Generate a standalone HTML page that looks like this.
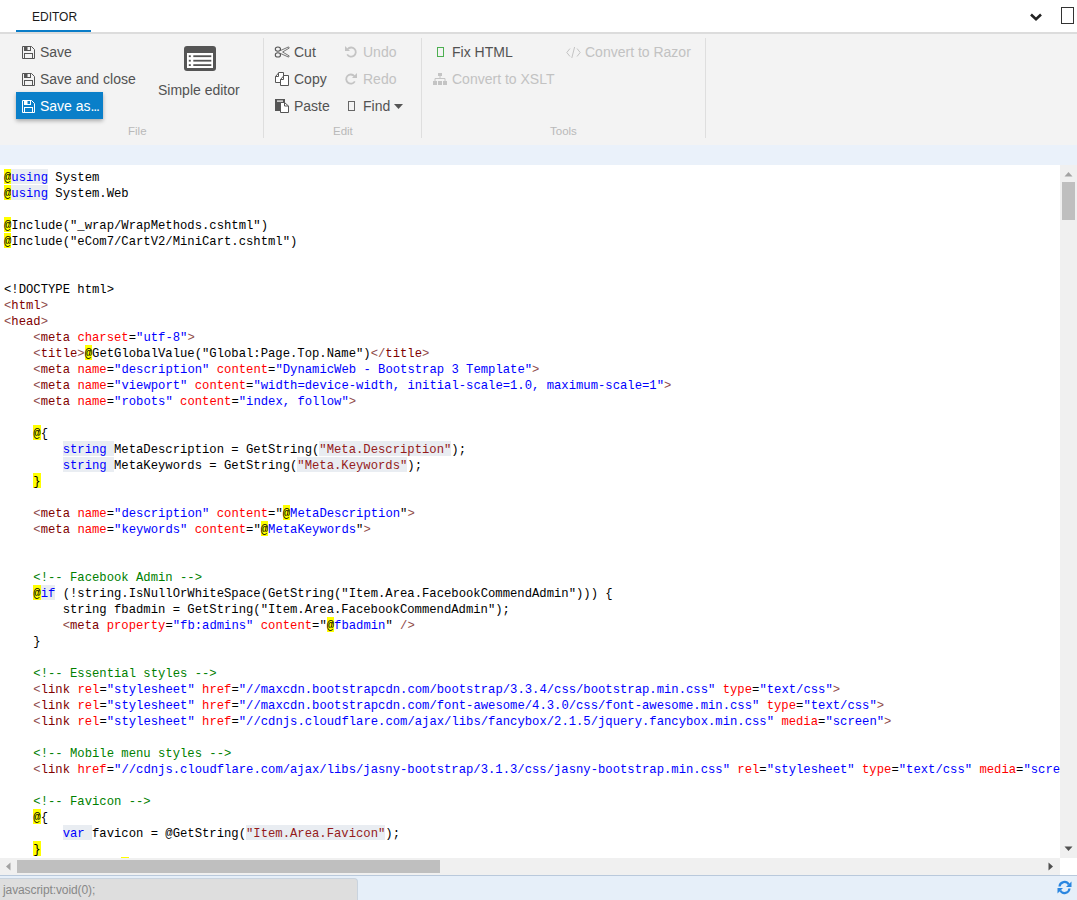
<!DOCTYPE html>
<html><head><meta charset="utf-8">
<style>
*{margin:0;padding:0;box-sizing:border-box}
html,body{width:1077px;height:900px;overflow:hidden;background:#fff}
body{position:relative;font-family:"Liberation Sans",sans-serif;color:#4a4a4a}
.abs{position:absolute}
#topbar{left:0;top:0;width:1077px;height:32px;background:#fff}
#tab{left:32px;top:10px;font-size:12px;line-height:14px;color:#1a1a1a;letter-spacing:0}
#tabline{left:16px;top:30px;width:75px;height:2px;background:#0a7dc8}
#topsep{left:0;top:32px;width:1077px;height:2px;background:#dcdcdc}
#ribbon{left:0;top:34px;width:1077px;height:111px;background:#f3f3f3}
#band{left:0;top:145px;width:1077px;height:20px;background:#eaf1fa}
.t{position:absolute;font-size:14px;line-height:16px;white-space:nowrap;color:#525252}
.dis{color:#c2c2c2}
.lbl{position:absolute;font-size:11.5px;line-height:13px;color:#b9b9b9;white-space:nowrap}
.vsep{position:absolute;top:38px;width:1px;height:100px;background:#dedede}
#saveas{left:16px;top:92px;width:87px;height:27px;background:#0a7fc9;box-shadow:0 2px 4px rgba(0,0,0,.3)}
#code{left:0;top:165px;width:1060px;height:693px;overflow:hidden;background:#fff}
#codein{position:absolute;left:4px;top:4px;font-family:"Liberation Mono",monospace;font-size:12.22px;line-height:16px;white-space:pre;color:#000}
.ln{height:16px;line-height:18px}
.y,.kw,.str{display:inline-block;vertical-align:top;height:15px}
.y{background:#ffff00}
.kw{color:#0000ff;background:#e9edf2}
.str{color:#951b1b;background:#e9edf2}
.tb{color:#8f4a4a}
.tn{color:#800000}
.an{color:#ff0000}
.av{color:#0000ff}
.cm{color:#008000}
#vscroll{left:1060px;top:165px;width:17px;height:693px;background:#f0f0f0}
#vthumb{left:1062px;top:182px;width:13px;height:38px;background:#bfbfbf}
#hscroll{left:0;top:858px;width:1060px;height:17px;background:#f0f0f0}
#hthumb{left:17px;top:860px;width:423px;height:13px;background:#bfbfbf}
#corner{left:1060px;top:858px;width:17px;height:17px;background:#fff}
#status{left:0;top:875px;width:1077px;height:25px;background:#e6eff9;border-top:1px solid #b9c9dc}
#stbox{left:0;top:878px;width:358px;height:22px;background:#dedede;border:1px solid #c9d3de;border-left:none;border-bottom:none;border-top-right-radius:4px}
#sttext{left:3px;top:883px;font-size:12px;line-height:14px;color:#888;white-space:nowrap;letter-spacing:-0.1px}
</style></head><body>
<div id="topbar" class="abs"></div>
<div id="tab" class="abs">EDITOR</div>
<div id="tabline" class="abs"></div>
<div id="topsep" class="abs"></div>
<svg class="abs" style="left:1029px;top:12px" width="14" height="10" viewBox="0 0 14 10"><path d="M2 2.5 L7 7.2 L12 2.5" fill="none" stroke="#222" stroke-width="2.6"/></svg>
<div class="abs" style="left:1061px;top:7px;width:13px;height:17px;border:1px solid #333"></div>

<div id="ribbon" class="abs"></div>
<!-- File group -->
<svg class="abs" style="left:22px;top:46px" width="13" height="13" viewBox="0 0 13 13"><path d="M0.5 0.5H9.5L12.5 3.5V12.5H0.5Z" fill="none" stroke="#555" stroke-width="1"/><rect x="2.5" y="0.5" width="6" height="4" fill="none" stroke="#555"/><rect x="3" y="1" width="2.5" height="3" fill="#555"/><rect x="2.5" y="7.5" width="8" height="5" fill="none" stroke="#555"/></svg>
<div class="t" style="left:40px;top:44px">Save</div>
<svg class="abs" style="left:22px;top:73px" width="13" height="13" viewBox="0 0 13 13"><path d="M0.5 0.5H9.5L12.5 3.5V12.5H0.5Z" fill="none" stroke="#555" stroke-width="1"/><rect x="2.5" y="0.5" width="6" height="4" fill="none" stroke="#555"/><rect x="3" y="1" width="2.5" height="3" fill="#555"/><rect x="2.5" y="7.5" width="8" height="5" fill="none" stroke="#555"/></svg>
<div class="t" style="left:40px;top:71px">Save and close</div>
<div id="saveas" class="abs"></div>
<svg class="abs" style="left:22px;top:100px" width="13" height="13" viewBox="0 0 13 13"><path d="M0.5 0.5H9.5L12.5 3.5V12.5H0.5Z" fill="none" stroke="#fff" stroke-width="1"/><rect x="2.5" y="0.5" width="6" height="4" fill="none" stroke="#fff"/><rect x="3" y="1" width="2.5" height="3" fill="#fff"/><rect x="2.5" y="7.5" width="8" height="5" fill="none" stroke="#fff"/></svg>
<div class="t" style="left:40px;top:98px;color:#fff">Save as<span style="letter-spacing:-1.2px">...</span></div>
<svg class="abs" style="left:184px;top:46px" width="32" height="25" viewBox="0 0 32 25"><rect x="0" y="0" width="32" height="25" rx="3" fill="#555"/><rect x="3" y="7" width="26" height="15" fill="#fff"/><rect x="4.8" y="9.3" width="2" height="1.8" fill="#555"/><rect x="4.8" y="13.8" width="2" height="1.8" fill="#555"/><rect x="4.8" y="18.2" width="2" height="1.8" fill="#555"/><rect x="9.3" y="9.3" width="18" height="1.8" fill="#555"/><rect x="9.3" y="13.8" width="18" height="1.8" fill="#555"/><rect x="9.3" y="18.2" width="18" height="1.8" fill="#555"/></svg>
<div class="t" style="left:158px;top:82px">Simple editor</div>
<div class="lbl" style="left:128px;top:125px">File</div>
<div class="vsep" style="left:263px"></div>
<!-- Edit group -->
<svg class="abs" style="left:274px;top:46px" width="16" height="12" viewBox="0 0 16 12"><ellipse cx="3.9" cy="3.1" rx="2.6" ry="2.1" fill="none" stroke="#555" stroke-width="1.1"/><ellipse cx="3.9" cy="8.9" rx="2.6" ry="2.1" fill="none" stroke="#555" stroke-width="1.1"/><path d="M6.3 4.6 L14.6 0.9 L15.2 2.1 L8.6 6 L15.2 9.9 L14.6 11.1 L6.3 7.4" fill="none" stroke="#555" stroke-width="0.8" stroke-linejoin="round"/></svg>
<div class="t" style="left:294px;top:44px">Cut</div>
<svg class="abs" style="left:275px;top:72px" width="15" height="14" viewBox="0 0 15 14"><path d="M0.5 4.5L4 0.5H8.5V10.5H0.5Z" fill="#fff" stroke="#555"/><path d="M0.5 4.5H3.5V0.5" fill="none" stroke="#555"/><path d="M5.5 7.5L9 3.5H13.5V13.5H5.5Z" fill="#fff" stroke="#555"/><path d="M5.5 7.5H8.5V3.5" fill="none" stroke="#555"/></svg>
<div class="t" style="left:294px;top:71px">Copy</div>
<svg class="abs" style="left:275px;top:99px" width="15" height="14" viewBox="0 0 15 14"><rect x="0.5" y="0.5" width="9" height="11" fill="#555" stroke="#555"/><rect x="2" y="1.5" width="6" height="1.2" fill="#fff"/><path d="M5.5 3.5H9.5L13.5 7V13.5H5.5Z" fill="#fff" stroke="#555"/><path d="M9.5 3.5V7H13.5" fill="none" stroke="#555"/></svg>
<div class="t" style="left:294px;top:98px">Paste</div>
<svg class="abs" style="left:345px;top:46px" width="12" height="12" viewBox="0 0 12 12"><path d="M2.6 3.2 A4.6 4.6 0 1 1 2.2 8.4" fill="none" stroke="#c4c4c4" stroke-width="1.8"/><path d="M0 0 L0 5 L5 5 Z" fill="#c4c4c4"/></svg>
<div class="t dis" style="left:363px;top:44px">Undo</div>
<svg class="abs" style="left:345px;top:73px" width="12" height="12" viewBox="0 0 12 12"><path d="M9.4 3.2 A4.6 4.6 0 1 0 9.8 8.4" fill="none" stroke="#c4c4c4" stroke-width="1.8"/><path d="M12 0 L12 5 L7 5 Z" fill="#c4c4c4"/></svg>
<div class="t dis" style="left:363px;top:71px">Redo</div>
<div class="abs" style="left:348px;top:101px;width:7px;height:10px;border:1px solid #666"></div>
<div class="t" style="left:363px;top:98px">Find</div>
<svg class="abs" style="left:394px;top:104px" width="9" height="5" viewBox="0 0 9 5"><path d="M0 0H9L4.5 5Z" fill="#555"/></svg>
<div class="lbl" style="left:333px;top:125px">Edit</div>
<div class="vsep" style="left:421px"></div>
<!-- Tools group -->
<div class="abs" style="left:437px;top:47px;width:7px;height:10px;border:1px solid #4caf50"></div>
<div class="t" style="left:452px;top:44px">Fix HTML</div>
<svg class="abs" style="left:566px;top:47px" width="15" height="11" viewBox="0 0 15 11"><path d="M4 1.5 L0.8 5.5 L4 9.5 M11 1.5 L14.2 5.5 L11 9.5 M8.6 0 L5.8 11" fill="none" stroke="#c4c4c4" stroke-width="1"/></svg>
<div class="t dis" style="left:585px;top:44px">Convert to Razor</div>
<svg class="abs" style="left:433px;top:73px" width="14" height="12" viewBox="0 0 14 12"><rect x="5" y="0" width="4" height="3" fill="#c4c4c4"/><path d="M7 3V5.5M2 8V5.5H12V8" fill="none" stroke="#c4c4c4" stroke-width="1"/><rect x="0" y="8" width="4" height="4" fill="#c4c4c4"/><rect x="5" y="8" width="4" height="4" fill="#c4c4c4"/><rect x="10" y="8" width="4" height="4" fill="#c4c4c4"/></svg>
<div class="t dis" style="left:452px;top:71px">Convert to XSLT</div>
<div class="lbl" style="left:550px;top:125px">Tools</div>
<div class="vsep" style="left:705px"></div>

<div id="band" class="abs"></div>
<div id="code" class="abs"><div id="codein"><div class="ln"><span class="y">@</span><span class="kw">using</span> System</div><div class="ln"><span class="y">@</span><span class="kw">using</span> System.Web</div><div class="ln">&#8203;</div><div class="ln"><span class="y">@</span>Include("_wrap/WrapMethods.cshtml")</div><div class="ln"><span class="y">@</span>Include("eCom7/CartV2/MiniCart.cshtml")</div><div class="ln">&#8203;</div><div class="ln">&#8203;</div><div class="ln">&lt;!DOCTYPE html&gt;</div><div class="ln"><span class="tb">&lt;</span><span class="tn">html</span><span class="tb">&gt;</span></div><div class="ln"><span class="tb">&lt;</span><span class="tn">head</span><span class="tb">&gt;</span></div><div class="ln">    <span class="tb">&lt;</span><span class="tn">meta</span> <span class="an">charset</span>=<span class="av">"utf-8"</span><span class="tb">&gt;</span></div><div class="ln">    <span class="tb">&lt;</span><span class="tn">title</span><span class="tb">&gt;</span><span class="y">@</span>GetGlobalValue("Global:Page.Top.Name")<span class="tb">&lt;/</span><span class="tn">title</span><span class="tb">&gt;</span></div><div class="ln">    <span class="tb">&lt;</span><span class="tn">meta</span> <span class="an">name</span>=<span class="av">"description"</span> <span class="an">content</span>=<span class="av">"DynamicWeb - Bootstrap 3 Template"</span><span class="tb">&gt;</span></div><div class="ln">    <span class="tb">&lt;</span><span class="tn">meta</span> <span class="an">name</span>=<span class="av">"viewport"</span> <span class="an">content</span>=<span class="av">"width=device-width, initial-scale=1.0, maximum-scale=1"</span><span class="tb">&gt;</span></div><div class="ln">    <span class="tb">&lt;</span><span class="tn">meta</span> <span class="an">name</span>=<span class="av">"robots"</span> <span class="an">content</span>=<span class="av">"index, follow"</span><span class="tb">&gt;</span></div><div class="ln">&#8203;</div><div class="ln">    <span class="y">@</span>{</div><div class="ln">        <span class="kw">string </span>MetaDescription = GetString(<span class="str">"Meta.Description"</span>);</div><div class="ln">        <span class="kw">string </span>MetaKeywords = GetString(<span class="str">"Meta.Keywords"</span>);</div><div class="ln">    <span class="y">}</span></div><div class="ln">&#8203;</div><div class="ln">    <span class="tb">&lt;</span><span class="tn">meta</span> <span class="an">name</span>=<span class="av">"description"</span> <span class="an">content</span>="<span class="y">@</span><span class="av">MetaDescription</span>"<span class="tb">&gt;</span></div><div class="ln">    <span class="tb">&lt;</span><span class="tn">meta</span> <span class="an">name</span>=<span class="av">"keywords"</span> <span class="an">content</span>="<span class="y">@</span><span class="av">MetaKeywords</span>"<span class="tb">&gt;</span></div><div class="ln">&#8203;</div><div class="ln">&#8203;</div><div class="ln">    <span class="cm">&lt;!-- Facebook Admin --&gt;</span></div><div class="ln">    <span class="y">@</span><span class="kw">if</span> (!string.IsNullOrWhiteSpace(GetString("Item.Area.FacebookCommendAdmin"))) {</div><div class="ln">        string fbadmin = GetString("Item.Area.FacebookCommendAdmin");</div><div class="ln">        <span class="tb">&lt;</span><span class="tn">meta</span> <span class="an">property</span>=<span class="av">"fb:admins"</span> <span class="an">content</span>="<span class="y">@</span><span class="av">fbadmin</span>" <span class="tb">/&gt;</span></div><div class="ln">    }</div><div class="ln">&#8203;</div><div class="ln">    <span class="cm">&lt;!-- Essential styles --&gt;</span></div><div class="ln">    <span class="tb">&lt;</span><span class="tn">link</span> <span class="an">rel</span>=<span class="av">"stylesheet"</span> <span class="an">href</span>=<span class="av">"//maxcdn.bootstrapcdn.com/bootstrap/3.3.4/css/bootstrap.min.css"</span> <span class="an">type</span>=<span class="av">"text/css"</span><span class="tb">&gt;</span></div><div class="ln">    <span class="tb">&lt;</span><span class="tn">link</span> <span class="an">rel</span>=<span class="av">"stylesheet"</span> <span class="an">href</span>=<span class="av">"//maxcdn.bootstrapcdn.com/font-awesome/4.3.0/css/font-awesome.min.css"</span> <span class="an">type</span>=<span class="av">"text/css"</span><span class="tb">&gt;</span></div><div class="ln">    <span class="tb">&lt;</span><span class="tn">link</span> <span class="an">rel</span>=<span class="av">"stylesheet"</span> <span class="an">href</span>=<span class="av">"//cdnjs.cloudflare.com/ajax/libs/fancybox/2.1.5/jquery.fancybox.min.css"</span> <span class="an">media</span>=<span class="av">"screen"</span><span class="tb">&gt;</span></div><div class="ln">&#8203;</div><div class="ln">    <span class="cm">&lt;!-- Mobile menu styles --&gt;</span></div><div class="ln">    <span class="tb">&lt;</span><span class="tn">link</span> <span class="an">href</span>=<span class="av">"//cdnjs.cloudflare.com/ajax/libs/jasny-bootstrap/3.1.3/css/jasny-bootstrap.min.css"</span> <span class="an">rel</span>=<span class="av">"stylesheet"</span> <span class="an">type</span>=<span class="av">"text/css"</span> <span class="an">media</span>=<span class="av">"screen"</span><span class="tb">&gt;</span></div><div class="ln">&#8203;</div><div class="ln">    <span class="cm">&lt;!-- Favicon --&gt;</span></div><div class="ln">    <span class="y">@</span>{</div><div class="ln">        <span class="kw">var </span>favicon = @GetString(<span class="str">"Item.Area.Favicon"</span>);</div><div class="ln">    <span class="y">}</span></div><div class="ln">    <span class="tb">&lt;</span><span class="tn">link</span> <span class="an">href</span>="<span class="y">@</span><span class="av">favicon</span>" <span class="an">rel</span>=<span class="av">"shortcut icon"</span> <span class="an">type</span>=<span class="av">"image/x-icon"</span><span class="tb">&gt;</span></div></div></div>
<div id="vscroll" class="abs"></div>
<svg class="abs" style="left:1064px;top:171px" width="9" height="6" viewBox="0 0 9 6"><path d="M0.5 5.5H8.5L4.5 1Z" fill="#a3a3a3"/></svg>
<div id="vthumb" class="abs"></div>
<svg class="abs" style="left:1064px;top:846px" width="9" height="6" viewBox="0 0 9 6"><path d="M0.5 0.5H8.5L4.5 5Z" fill="#505050"/></svg>
<div id="hscroll" class="abs"></div>
<svg class="abs" style="left:5px;top:862px" width="6" height="9" viewBox="0 0 6 9"><path d="M5.5 0.5V8.5L1 4.5Z" fill="#a3a3a3"/></svg>
<div id="hthumb" class="abs"></div>
<svg class="abs" style="left:1048px;top:862px" width="6" height="9" viewBox="0 0 6 9"><path d="M0.5 0.5V8.5L5 4.5Z" fill="#505050"/></svg>
<div id="corner" class="abs"></div>
<div id="status" class="abs"></div>
<div id="stbox" class="abs"></div>
<div id="sttext" class="abs">javascript:void(0);</div>
<svg class="abs" style="left:1057px;top:880px" width="15" height="15" viewBox="0 0 15 15"><path d="M2.5 6.5 A5 5 0 0 1 11.8 4.5" fill="none" stroke="#2a86e0" stroke-width="2.2"/><path d="M14.5 1.5 L14.5 7 L9 7 Z" fill="#2a86e0"/><path d="M12.5 8.5 A5 5 0 0 1 3.2 10.5" fill="none" stroke="#2a86e0" stroke-width="2.2"/><path d="M0.5 13.5 L0.5 8 L6 8 Z" fill="#2a86e0"/></svg>
</body></html>
